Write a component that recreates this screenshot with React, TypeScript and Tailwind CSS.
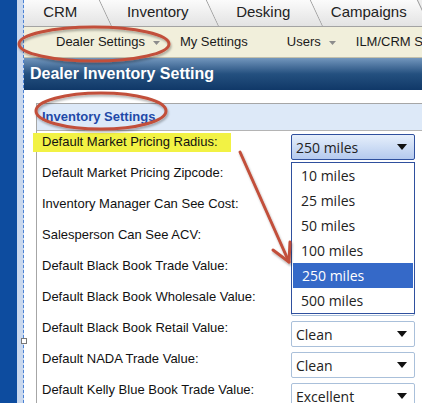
import React from "react";

const tabs = [
  { label: "CRM", w: "w-[88px]" },
  { label: "Inventory", w: "w-[107px]" },
  { label: "Desking", w: "w-[104px]" },
  { label: "Campaigns", w: "w-[107px]" },
];

// rows 2-6 sit under the open list, so their controls are left blank
const rows: { label: string; value: string }[] = [
  { label: "Default Market Pricing Radius:", value: "250 miles" },
  { label: "Default Market Pricing Zipcode:", value: "" },
  { label: "Inventory Manager Can See Cost:", value: "" },
  { label: "Salesperson Can See ACV:", value: "" },
  { label: "Default Black Book Trade Value:", value: "" },
  { label: "Default Black Book Wholesale Value:", value: "" },
  { label: "Default Black Book Retail Value:", value: "Clean" },
  { label: "Default NADA Trade Value:", value: "Clean" },
  { label: "Default Kelly Blue Book Trade Value:", value: "Excellent" },
];

const options = ["10 miles", "25 miles", "50 miles", "100 miles", "250 miles", "500 miles"];

function Caret() {
  return (
    <svg width="7" height="4" viewBox="0 0 7 4" className="ml-[8px] mt-[2px] shrink-0">
      <path d="M0 0h7L3.5 4z" fill="#8c8c8c" />
    </svg>
  );
}

function Arrow() {
  return (
    <svg width="10" height="6" viewBox="0 0 10 6" className="shrink-0">
      <path d="M0 0h10L5 6z" fill="#111" />
    </svg>
  );
}

function Select({ value, open }: { value: string; open?: boolean }) {
  return (
    <div
      className={`flex h-[26px] items-center justify-between rounded-[2px] border pl-[4px] pr-[7px] font-['Open_Sans',sans-serif] text-[14px] text-[#222] ${
        open
          ? "border-[#2f509e] bg-linear-to-b from-[#e6effb] to-[#b5caee]"
          : "border-[#aac0da] bg-white"
      }`}
    >
      <span>{value}</span>
      <Arrow />
    </div>
  );
}

export default function App() {
  return (
    <div className="relative flex h-[403px] w-[422px] overflow-hidden bg-white font-['Liberation_Sans',Arial,sans-serif]">
      {/* left chrome */}
      <div className="w-[17px] shrink-0 bg-[#0d4c9f]" />
      <div className="w-[7px] shrink-0 border-r border-dashed border-[#4b82d4] bg-[#c9d8ee]" />

      <div className="flex min-w-0 flex-1 flex-col">
        {/* tabs */}
        <div className="flex h-[27px] shrink-0 overflow-hidden border-b border-[#a3a3a3] bg-[#eeeeee]">
          {tabs.map((t) => (
            <div
              key={t.label}
              className={`${t.w} shrink-0 origin-bottom skew-x-[25deg] border-r border-[#9c9c9c] bg-linear-to-b from-[#fbfbfb] to-[#e3e3e3]`}
            >
              <div className="-skew-x-[25deg] pt-[3px] text-center text-[15px] leading-[18px] text-[#222]">
                {t.label}
              </div>
            </div>
          ))}
        </div>

        {/* sub nav */}
        <div className="flex h-[31px] shrink-0 items-center overflow-hidden whitespace-nowrap border-b border-[#c2c0ac] bg-[#f1efdb] text-[13px] text-[#1a1a1a]">
          <span className="ml-[32px] shrink-0">Dealer Settings</span>
          <Caret />
          <span className="ml-[20px] shrink-0">My Settings</span>
          <span className="ml-[39px] shrink-0">Users</span>
          <Caret />
          <span className="ml-[20px] shrink-0">ILM/CRM Settings</span>
        </div>

        {/* header bar */}
        <div className="flex h-[32px] shrink-0 items-center bg-linear-to-b from-[#7397bd] via-[#24507f] to-[#103868] pl-[6px] text-[16px] font-bold text-white">
          Dealer Inventory Setting
        </div>

        {/* content */}
        <div className="flex-1 pl-[12px] pt-[13px]">
          <div className="h-full border-l border-t border-[#a6a6a6]">
            <div className="flex h-[27px] items-center border-b border-[#b4b4b4] bg-[#dde9f8] pl-[5px] text-[13px] font-bold text-[#1f49a8]">
              Inventory Settings
            </div>

            {rows.map((r, i) => (
              <div key={r.label} className="grid h-[31px] grid-cols-[254px_124px]">
                <div className="whitespace-nowrap pl-[5px] pt-[3px] text-[13px] leading-[16px] text-[#111]">
                  {i === 0 ? (
                    <span className="-mt-[1px] -ml-[9px] inline-block bg-[#f2f244] pb-[2px] pl-[9px] pr-[13px] pt-[1px]">
                      {r.label}
                    </span>
                  ) : (
                    r.label
                  )}
                </div>
                <div className={`relative ${i === 0 ? "mt-[3px]" : "mt-[4px]"}`}>
                  <Select value={r.value} open={i === 0} />
                  {i === 0 && (
                    <div className="absolute left-0 top-full z-10 w-full border border-[#2f509e] bg-white font-['Open_Sans',sans-serif] text-[14px] text-[#222]">
                      {options.map((o) => (
                        <div
                          key={o}
                          className={`flex h-[25px] items-center pl-[9px] ${
                            o === "250 miles" ? "mx-[1px] bg-[#3569c8] pl-[8px] text-white" : ""
                          }`}
                        >
                          {o}
                        </div>
                      ))}
                    </div>
                  )}
                </div>
              </div>
            ))}
          </div>
        </div>
      </div>

      {/* selection handle on the dashed guide */}
      <div className="absolute left-[21px] top-[338px] h-[6px] w-[6px] border border-[#777] bg-white" />

      {/* annotations */}
      <svg className="pointer-events-none absolute inset-0 z-20" width="422" height="403">
        <defs>
          <filter id="sh" x="-20%" y="-20%" width="140%" height="140%">
            <feDropShadow dx="1" dy="2" stdDeviation="1" floodColor="#000" floodOpacity="0.3" />
          </filter>
        </defs>
        <g fill="none" stroke="#c24f3a" strokeWidth="3" filter="url(#sh)">
          <ellipse cx="94" cy="44" rx="75" ry="17" />
          <ellipse cx="101" cy="111" rx="65" ry="18" />
          <path d="M240 152 L289 262" strokeLinecap="round" />
          <path d="M273 250 L289 262 L290 242" strokeLinecap="round" strokeLinejoin="round" />
        </g>
      </svg>
    </div>
  );
}
